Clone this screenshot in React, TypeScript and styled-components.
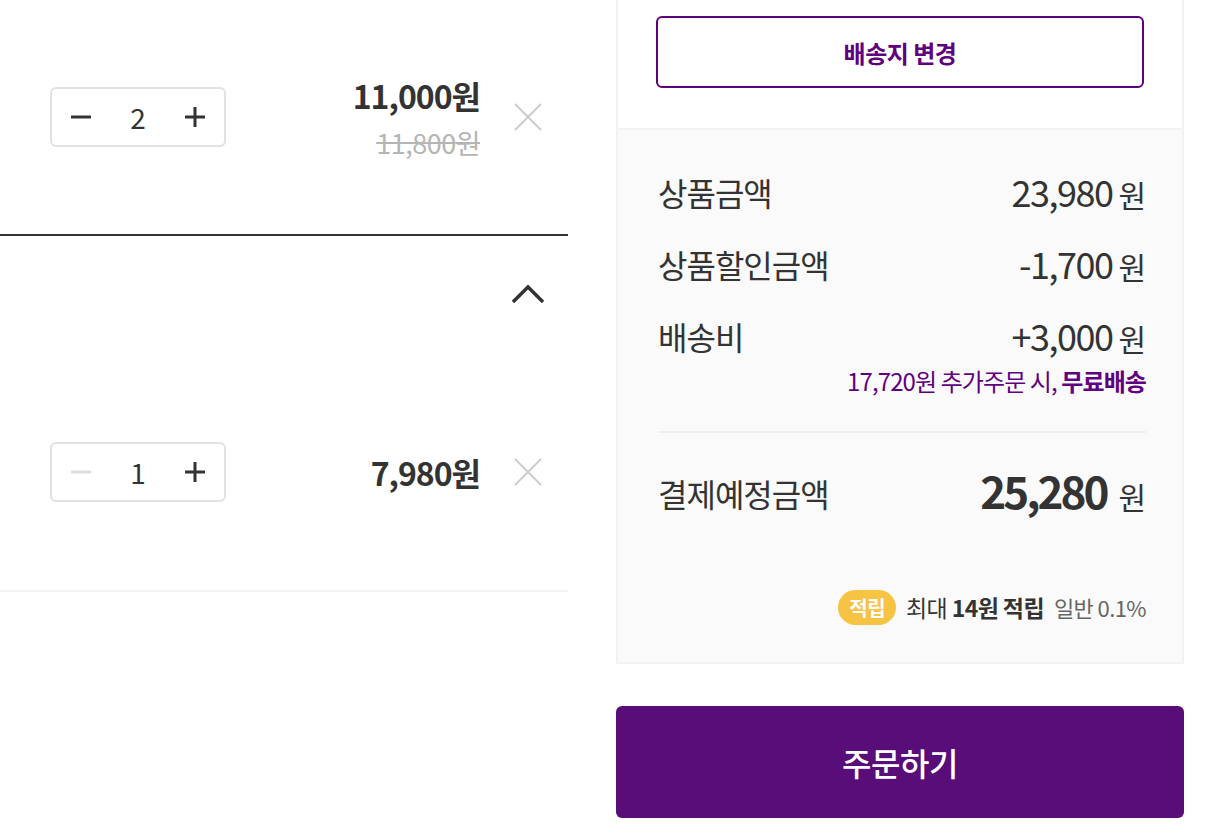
import React from "react";
import styled, { createGlobalStyle } from "styled-components";

const GlobalStyle = createGlobalStyle`
  html, body { margin: 0; padding: 0; background: #fff; }
  body { font-family: "Noto Sans CJK KR", "Noto Sans", sans-serif; color: #333; }
  * { box-sizing: border-box; }
  button { font-family: inherit; }
`;

const purple = "#5f0080";

const Page = styled.div`
  display: flex;
  gap: 48px;
  width: 1216px;
  height: 840px;
  overflow: hidden;
`;

const LeftColumn = styled.div`
  width: 568px;
  display: flex;
  flex-direction: column;
`;

const ItemRow = styled.div<{ $height: number }>`
  height: ${(p) => p.$height}px;
  display: flex;
  align-items: center;
  padding-left: 50px;
`;

const Stepper = styled.div`
  width: 176px;
  height: 60px;
  border: 2px solid #e2e2e2;
  border-radius: 6px;
  display: flex;
  align-items: center;
`;

const StepButton = styled.button<{ $disabled?: boolean }>`
  width: 58px;
  height: 56px;
  border: 0;
  background: none;
  padding: 0;
  display: flex;
  align-items: center;
  justify-content: center;
  color: ${(p) => (p.$disabled ? "#ddd" : "#333")};
`;

const Count = styled.span`
  flex: 1;
  text-align: center;
  font-size: 28px;
  line-height: 1;
  color: #333;
`;

const PriceBlock = styled.div`
  margin-left: auto;
  display: flex;
  flex-direction: column;
  align-items: flex-end;
`;

const Price = styled.span`
  font-size: 32px;
  font-weight: 700;
  line-height: 40px;
  letter-spacing: -1px;
  color: #333;
`;

const OldPrice = styled.span`
  margin-top: 12px;
  font-size: 27px;
  line-height: 32px;
  letter-spacing: -0.5px;
  color: #b5b5b5;
  text-decoration: line-through;
`;

const DeleteButton = styled.button`
  width: 60px;
  height: 60px;
  margin: 0 10px 0 18px;
  border: 0;
  background: none;
  padding: 0;
  display: flex;
  align-items: center;
  justify-content: center;
`;

const Divider = styled.div<{ $color: string }>`
  height: 2px;
  background: ${(p) => p.$color};
`;

const GroupHeader = styled.div`
  height: 118px;
  display: flex;
  justify-content: flex-end;
  padding: 48px 23px 0 0;
`;

const RightColumn = styled.div`
  width: 568px;
  display: flex;
  flex-direction: column;
`;

const Panel = styled.div`
  border: 2px solid #f2f2f2;
  border-top: 0;
`;

const AddressSection = styled.div`
  background: #fff;
  padding: 16px 38px 40px;
  border-bottom: 2px solid #f2f2f2;
`;

const OutlineButton = styled.button`
  width: 100%;
  height: 72px;
  border: 2px solid ${purple};
  border-radius: 6px;
  background: #fff;
  color: ${purple};
  font-size: 24px;
  font-weight: 700;
  letter-spacing: -0.5px;
`;

const Summary = styled.div`
  background: #fafafa;
  padding: 39px 36px 37px 40px;
  display: flex;
  flex-direction: column;
`;

const SummaryRow = styled.div`
  display: flex;
  justify-content: space-between;
  align-items: center;
  height: 46px;
  line-height: 46px;
  & + & {
    margin-top: 26px;
  }
`;

const Label = styled.span`
  font-size: 32px;
  letter-spacing: -1px;
  color: #333;
`;

const Amount = styled.span`
  display: flex;
  align-items: baseline;
  font-size: 36px;
  letter-spacing: -1.5px;
  color: #333;
`;

const Won = styled.span`
  margin-left: 6px;
  font-size: 30px;
  letter-spacing: 0;
`;

const FreeShipNote = styled.p`
  margin: 6px 0 0;
  text-align: right;
  font-size: 24px;
  line-height: 32px;
  letter-spacing: -0.9px;
  color: ${purple};
  b {
    font-weight: 700;
  }
`;

const SummaryDivider = styled.div`
  height: 2px;
  background: #eeeeee;
  margin: 34px 0 30px;
`;

const TotalRow = styled.div`
  display: flex;
  justify-content: space-between;
  align-items: center;
  height: 60px;
  line-height: 60px;
`;

const TotalAmount = styled.span`
  display: flex;
  align-items: baseline;
  font-size: 44px;
  font-weight: 700;
  letter-spacing: -3px;
  color: #333;
`;

const TotalWon = styled.span`
  margin-left: 12px;
  font-size: 30px;
  font-weight: 400;
  letter-spacing: 0;
`;

const PointRow = styled.div`
  margin-top: 66px;
  height: 36px;
  display: flex;
  justify-content: flex-end;
  align-items: center;
  gap: 10px;
`;

const Badge = styled.span`
  height: 35px;
  padding: 0 11px;
  border-radius: 18px;
  background: #f6c343;
  color: #fff;
  font-size: 20px;
  font-weight: 700;
  display: flex;
  align-items: center;
  letter-spacing: -0.5px;
`;

const PointText = styled.span`
  font-size: 23px;
  letter-spacing: -0.6px;
  color: #333;
  b {
    font-weight: 700;
  }
`;

const PointSub = styled.span`
  font-size: 22px;
  letter-spacing: -0.6px;
  color: #666;
`;

const OrderButton = styled.button`
  margin-top: 42px;
  height: 112px;
  border: 0;
  border-radius: 6px;
  background: #580d79;
  color: #fff;
  font-size: 32px;
  font-weight: 500;
  letter-spacing: -0.5px;
`;

const Minus = () => (
  <svg width="20" height="4" viewBox="0 0 20 4">
    <rect x="0" y="0.5" width="20" height="3" fill="currentColor" />
  </svg>
);

const Plus = () => (
  <svg width="20" height="20" viewBox="0 0 20 20">
    <rect x="0" y="8.5" width="20" height="3" fill="currentColor" />
    <rect x="8.5" y="0" width="3" height="20" fill="currentColor" />
  </svg>
);

const Close = () => (
  <svg width="28" height="28" viewBox="0 0 28 28">
    <path d="M1 1 L27 27 M27 1 L1 27" stroke="#cccccc" strokeWidth="2" fill="none" />
  </svg>
);

const ChevronUp = () => (
  <svg width="34" height="20" viewBox="0 0 34 20">
    <path d="M2 18 L17 3 L32 18" stroke="#333" strokeWidth="3.5" fill="none" />
  </svg>
);

type Item = { count: number; price: string; old?: string };

const CartItem = ({ item, height }: { item: Item; height: number }) => (
  <ItemRow $height={height}>
    <Stepper>
      <StepButton $disabled={item.count <= 1}>
        <Minus />
      </StepButton>
      <Count>{item.count}</Count>
      <StepButton>
        <Plus />
      </StepButton>
    </Stepper>
    <PriceBlock>
      <Price>{item.price}원</Price>
      {item.old && <OldPrice>{item.old}원</OldPrice>}
    </PriceBlock>
    <DeleteButton>
      <Close />
    </DeleteButton>
  </ItemRow>
);

export default function App() {
  return (
    <>
      <GlobalStyle />
      <Page>
        <LeftColumn>
          <CartItem item={{ count: 2, price: "11,000", old: "11,800" }} height={234} />
          <Divider $color="#333" />
          <GroupHeader>
            <ChevronUp />
          </GroupHeader>
          <CartItem item={{ count: 1, price: "7,980" }} height={236} />
          <Divider $color="#f4f4f4" />
        </LeftColumn>
        <RightColumn>
          <Panel>
            <AddressSection>
              <OutlineButton>배송지 변경</OutlineButton>
            </AddressSection>
            <Summary>
              <SummaryRow>
                <Label>상품금액</Label>
                <Amount>
                  23,980<Won>원</Won>
                </Amount>
              </SummaryRow>
              <SummaryRow>
                <Label>상품할인금액</Label>
                <Amount>
                  -1,700<Won>원</Won>
                </Amount>
              </SummaryRow>
              <SummaryRow>
                <Label>배송비</Label>
                <Amount>
                  +3,000<Won>원</Won>
                </Amount>
              </SummaryRow>
              <FreeShipNote>
                17,720원 추가주문 시, <b>무료배송</b>
              </FreeShipNote>
              <SummaryDivider />
              <TotalRow>
                <Label>결제예정금액</Label>
                <TotalAmount>
                  25,280<TotalWon>원</TotalWon>
                </TotalAmount>
              </TotalRow>
              <PointRow>
                <Badge>적립</Badge>
                <PointText>
                  최대 <b>14원 적립</b>
                </PointText>
                <PointSub>일반 0.1%</PointSub>
              </PointRow>
            </Summary>
          </Panel>
          <OrderButton>주문하기</OrderButton>
        </RightColumn>
      </Page>
    </>
  );
}
